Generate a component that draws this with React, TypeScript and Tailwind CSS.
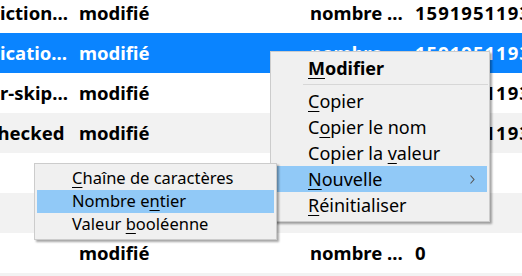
import React from 'react';

type Row = { name: string; nameOffset?: string; status: string; type: string; value: string; selected?: boolean };

const rows: Row[] = [
    { name: 'iction…', status: 'modifié', type: 'nombre …', value: '1591951193' },
    { name: 'icatio…', status: 'modifié', type: 'nombre …', value: '1591951193', selected: true },
    { name: 'r-skip…', status: 'modifié', type: 'nombre …', value: '1591951193' },
    { name: 'checked', nameOffset: '-ml-[12px]', status: 'modifié', type: 'nombre …', value: '1591951193' },
    { name: '', status: '', type: '', value: '' },
    { name: '', status: '', type: '', value: '' },
    { name: '', status: 'modifié', type: 'nombre …', value: '0' },
    { name: '', status: '', type: '', value: '' },
];

// label with one underlined access key
const Key = ({ before, k, after }: { before?: string; k: string; after: string }) => (
    <span>
        {before}
        <span className="underline underline-offset-[3px] decoration-1">{k}</span>
        {after}
    </span>
);

const mainItems = [
    { label: <Key k="C" after="opier" /> },
    { label: <Key before="C" k="o" after="pier le nom" /> },
    { label: <Key before="Copier la " k="v" after="aleur" /> },
    { label: <Key k="N" after="ouvelle" />, active: true, sub: true },
    { label: <Key k="R" after="éinitialiser" /> },
];

const subItems = [
    { label: <Key k="C" after="haîne de caractères" /> },
    { label: <Key before="Nombre e" k="n" after="tier" />, active: true },
    { label: <Key before="Valeur " k="b" after="ooléenne" /> },
];

export default function App() {
    return (
        <div className="relative w-[522px] h-[276px] overflow-hidden bg-white text-black font-['Noto_Sans',sans-serif]">
            <div className="flex flex-col -mt-[7px]">
                {rows.map((r, i) => (
                    <div
                        key={i}
                        className={`flex items-center h-[40px] shrink-0 font-bold text-[18.5px] whitespace-nowrap ${r.selected ? 'bg-[#0a84ff] text-white' : i % 2 === 1 ? 'bg-[#f2f2f2]' : 'bg-white'}`}
                    >
                        <div className="w-[79px] shrink-0 overflow-hidden">
                            <div className={r.nameOffset ?? ''}>{r.name}</div>
                        </div>
                        <div className="w-[231px] shrink-0">{r.status}</div>
                        <div className="w-[105px] shrink-0">{r.type}</div>
                        <div className="shrink-0 tracking-[1px]">{r.value}</div>
                    </div>
                ))}
            </div>

            {/* context menu */}
            <div className="absolute left-[270px] top-[51px] w-[220px] bg-[#f0f0f0] border border-[#cccccc] py-[3px] shadow-[2px_2px_2px_rgba(0,0,0,0.35)] text-[18px] text-black">
                <div className="h-[26px] flex items-center pl-[37px] font-bold">
                    <Key k="M" after="odifier" />
                </div>
                <div className="h-[7px] flex items-center pl-[32px] pr-[1px]">
                    <div className="h-px w-full bg-[#d7d7d7]" />
                </div>
                {mainItems.map((it, i) => (
                    <div key={i} className={`relative h-[26px] mx-[2px] flex items-center pl-[35px] ${it.active ? 'bg-[#91c9f7]' : ''}`}>
                        {it.label}
                        {it.sub && (
                            <svg className="absolute right-[12px] top-[9px]" width="5" height="9" viewBox="0 0 5 9">
                                <path d="M0.5 0.5 L4 4.5 L0.5 8.5" fill="none" stroke="#555" strokeWidth="1.1" />
                            </svg>
                        )}
                    </div>
                ))}
            </div>

            {/* submenu */}
            <div className="absolute left-[34px] top-[163px] w-[243px] bg-[#f0f0f0] border border-[#cccccc] py-[3px] shadow-[2px_2px_2px_rgba(0,0,0,0.35)] text-[16.5px] text-black">
                {subItems.map((it, i) => (
                    <div key={i} className={`h-[23px] mx-[2px] flex items-center pl-[35px] ${it.active ? 'bg-[#91c9f7]' : ''}`}>
                        {it.label}
                    </div>
                ))}
            </div>
        </div>
    );
}
